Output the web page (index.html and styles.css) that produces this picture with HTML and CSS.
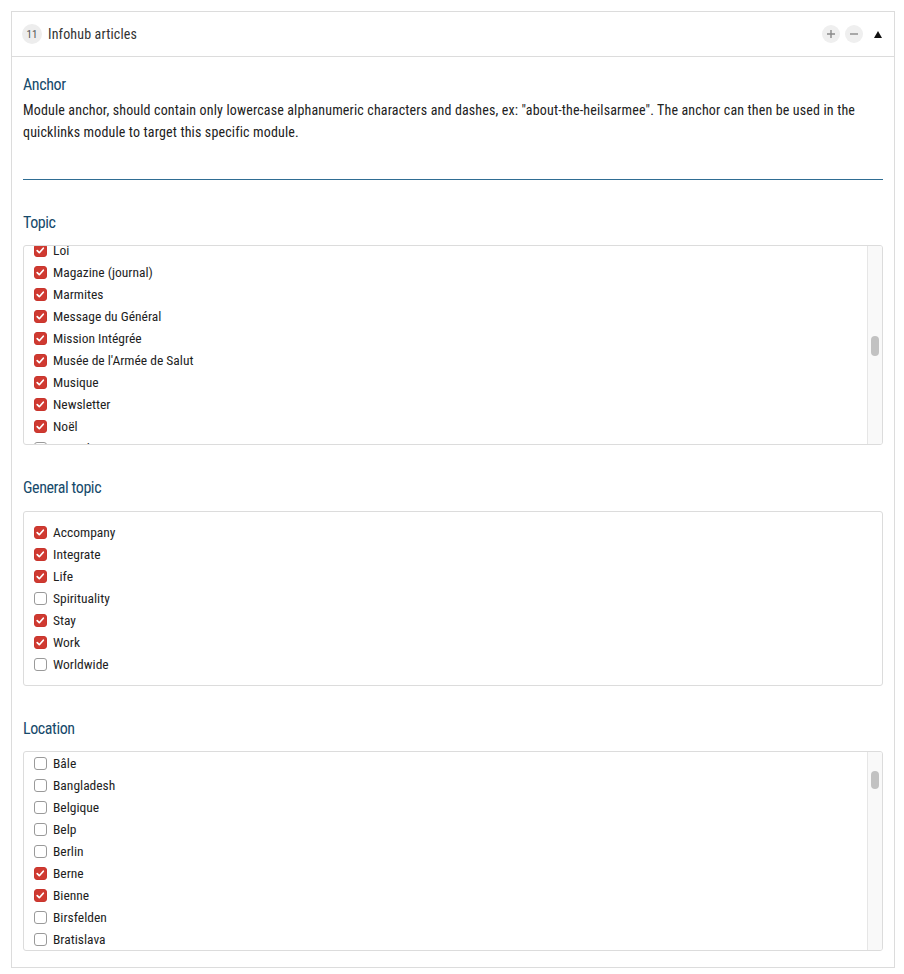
FILE: index.html
```html
<!DOCTYPE html>
<html lang="en">
<head>
<meta charset="utf-8">
<title>Infohub articles</title>
<link rel="stylesheet" href="styles.css">
</head>
<body>
<section class="panel">
  <header class="panel-head">
    <span class="badge">11</span>
    <span class="title">Infohub articles</span>
    <span class="spacer"></span>
    <button class="round-btn" aria-label="Add">
      <svg width="18" height="18" viewBox="0 0 18 18"><path d="M5 9h8M9 5v8" stroke="#8a8a8a" stroke-width="1.4"/></svg>
    </button>
    <button class="round-btn" aria-label="Remove">
      <svg width="18" height="18" viewBox="0 0 18 18"><path d="M5 9h8" stroke="#8a8a8a" stroke-width="1.4"/></svg>
    </button>
    <button class="toggle" aria-label="Collapse">
      <svg width="8" height="7" viewBox="0 0 8 7"><path d="M4 0L8 7H0z" fill="#111"/></svg>
    </button>
  </header>

  <div class="panel-body">
    <h3 class="field-label">Anchor</h3>
    <p class="help">Module anchor, should contain only lowercase alphanumeric characters and dashes, ex: "about-the-heilsarmee". The anchor can then be used in the quicklinks module to target this specific module.</p>
    <div class="text-input"></div>

    <h3 class="field-label gap">Topic</h3>
    <div class="checklist">
      <ul class="items items-topic">
        <li><span class="cb on"></span>Loi</li>
        <li><span class="cb on"></span>Magazine (journal)</li>
        <li><span class="cb on"></span>Marmites</li>
        <li><span class="cb on"></span>Message du Général</li>
        <li><span class="cb on"></span>Mission Intégrée</li>
        <li><span class="cb on"></span>Musée de l'Armée de Salut</li>
        <li><span class="cb on"></span>Musique</li>
        <li><span class="cb on"></span>Newsletter</li>
        <li><span class="cb on"></span>Noël</li>
        <li><span class="cb"></span>Nouvel An</li>
      </ul>
      <div class="track"><span class="thumb thumb-topic"></span></div>
    </div>

    <h3 class="field-label gap">General topic</h3>
    <div class="checklist static">
      <ul class="items items-padded">
        <li><span class="cb on"></span>Accompany</li>
        <li><span class="cb on"></span>Integrate</li>
        <li><span class="cb on"></span>Life</li>
        <li><span class="cb"></span>Spirituality</li>
        <li><span class="cb on"></span>Stay</li>
        <li><span class="cb on"></span>Work</li>
        <li><span class="cb"></span>Worldwide</li>
      </ul>
    </div>

    <h3 class="field-label gap">Location</h3>
    <div class="checklist">
      <ul class="items">
        <li><span class="cb"></span>Bâle</li>
        <li><span class="cb"></span>Bangladesh</li>
        <li><span class="cb"></span>Belgique</li>
        <li><span class="cb"></span>Belp</li>
        <li><span class="cb"></span>Berlin</li>
        <li><span class="cb on"></span>Berne</li>
        <li><span class="cb on"></span>Bienne</li>
        <li><span class="cb"></span>Birsfelden</li>
        <li><span class="cb"></span>Bratislava</li>
      </ul>
      <div class="track"><span class="thumb thumb-location"></span></div>
    </div>
  </div>
</section>
</body>
</html>
```

FILE: styles.css
```css
* { box-sizing: border-box; }

html, body {
  margin: 0;
  padding: 0;
  background: #fff;
}

body {
  font-family: "Roboto Condensed", "Liberation Sans Narrow", "DejaVu Sans Condensed", Roboto, sans-serif;
  font-stretch: condensed;
  color: #222;
  font-size: 13px;
}

.panel {
  margin: 11px 9px 0 11px;
  border: 1px solid #dcdcdc;
}

.panel-head {
  height: 45px;
  border-bottom: 1px solid #dcdcdc;
  display: flex;
  align-items: center;
  padding: 0 12px 0 10px;
}

.badge {
  width: 20px;
  height: 20px;
  border-radius: 50%;
  background: #ededed;
  color: #555;
  font-size: 11px;
  display: flex;
  align-items: center;
  justify-content: center;
}

.title {
  margin-left: 6px;
  font-size: 14px;
  letter-spacing: 0.15px;
  color: #333;
}

.spacer { flex: 1; }

.round-btn {
  width: 18px;
  height: 18px;
  border-radius: 50%;
  border: 0;
  padding: 0;
  background: #efefef;
  display: flex;
  margin-left: 5px;
}

.toggle {
  border: 0;
  padding: 0;
  background: none;
  display: flex;
  margin-left: 11px;
}

.panel-body {
  padding: 16px 11px 16px 11px;
}

.field-label {
  margin: 0;
  padding-top: 1px;
  font-size: 16px;
  letter-spacing: -0.4px;
  line-height: 22px;
  font-weight: normal;
  color: #164a6b;
}

.field-label.gap { margin-top: 31px; }

.help {
  margin: 3px 0 0;
  font-size: 14px;
  letter-spacing: 0.15px;
  line-height: 22px;
  color: #222;
}

.text-input {
  height: 37px;
  border-bottom: 1px solid #2f6d93;
}

.checklist {
  margin-top: 11px;
  height: 200px;
  border: 1px solid #dcdcdc;
  border-radius: 3px;
  display: flex;
  overflow: hidden;
}

.checklist.static {
  height: auto;
  margin-top: 12px;
}

.items {
  list-style: none;
  margin: 0;
  padding: 0;
  flex: 1;
  align-self: flex-start;
}

.items-topic { margin-top: -7px; }

.items-padded { padding: 9px 0 10px; }

.items li {
  height: 22px;
  display: flex;
  align-items: center;
  padding-left: 10px;
  font-size: 13.5px;
  color: #1e1e1e;
}

.cb {
  width: 13px;
  height: 13px;
  border: 1px solid #9a9a9a;
  border-radius: 3px;
  background: #fff;
  margin-right: 6px;
  flex: none;
}

.cb.on {
  border-color: #c9352d;
  background: #cf3a31 url("data:image/svg+xml,%3Csvg xmlns='http://www.w3.org/2000/svg' width='13' height='13' viewBox='0 0 13 13'%3E%3Cpath d='M3.2 6.6l2.1 2.1 4-4.5' fill='none' stroke='%23fff' stroke-width='1.7' stroke-linecap='round' stroke-linejoin='round'/%3E%3C/svg%3E") center / 13px 13px no-repeat;
}

.track {
  width: 15px;
  flex: none;
  background: #f9f9f9;
  border-left: 1px solid #e6e6e6;
  padding-left: 3px;
}

.thumb {
  display: block;
  width: 8px;
  height: 20px;
  border-radius: 4px;
  background: #c2c2c2;
}

.thumb-topic { margin-top: 90px; }
.thumb-location { margin-top: 19px; height: 18px; }
```
